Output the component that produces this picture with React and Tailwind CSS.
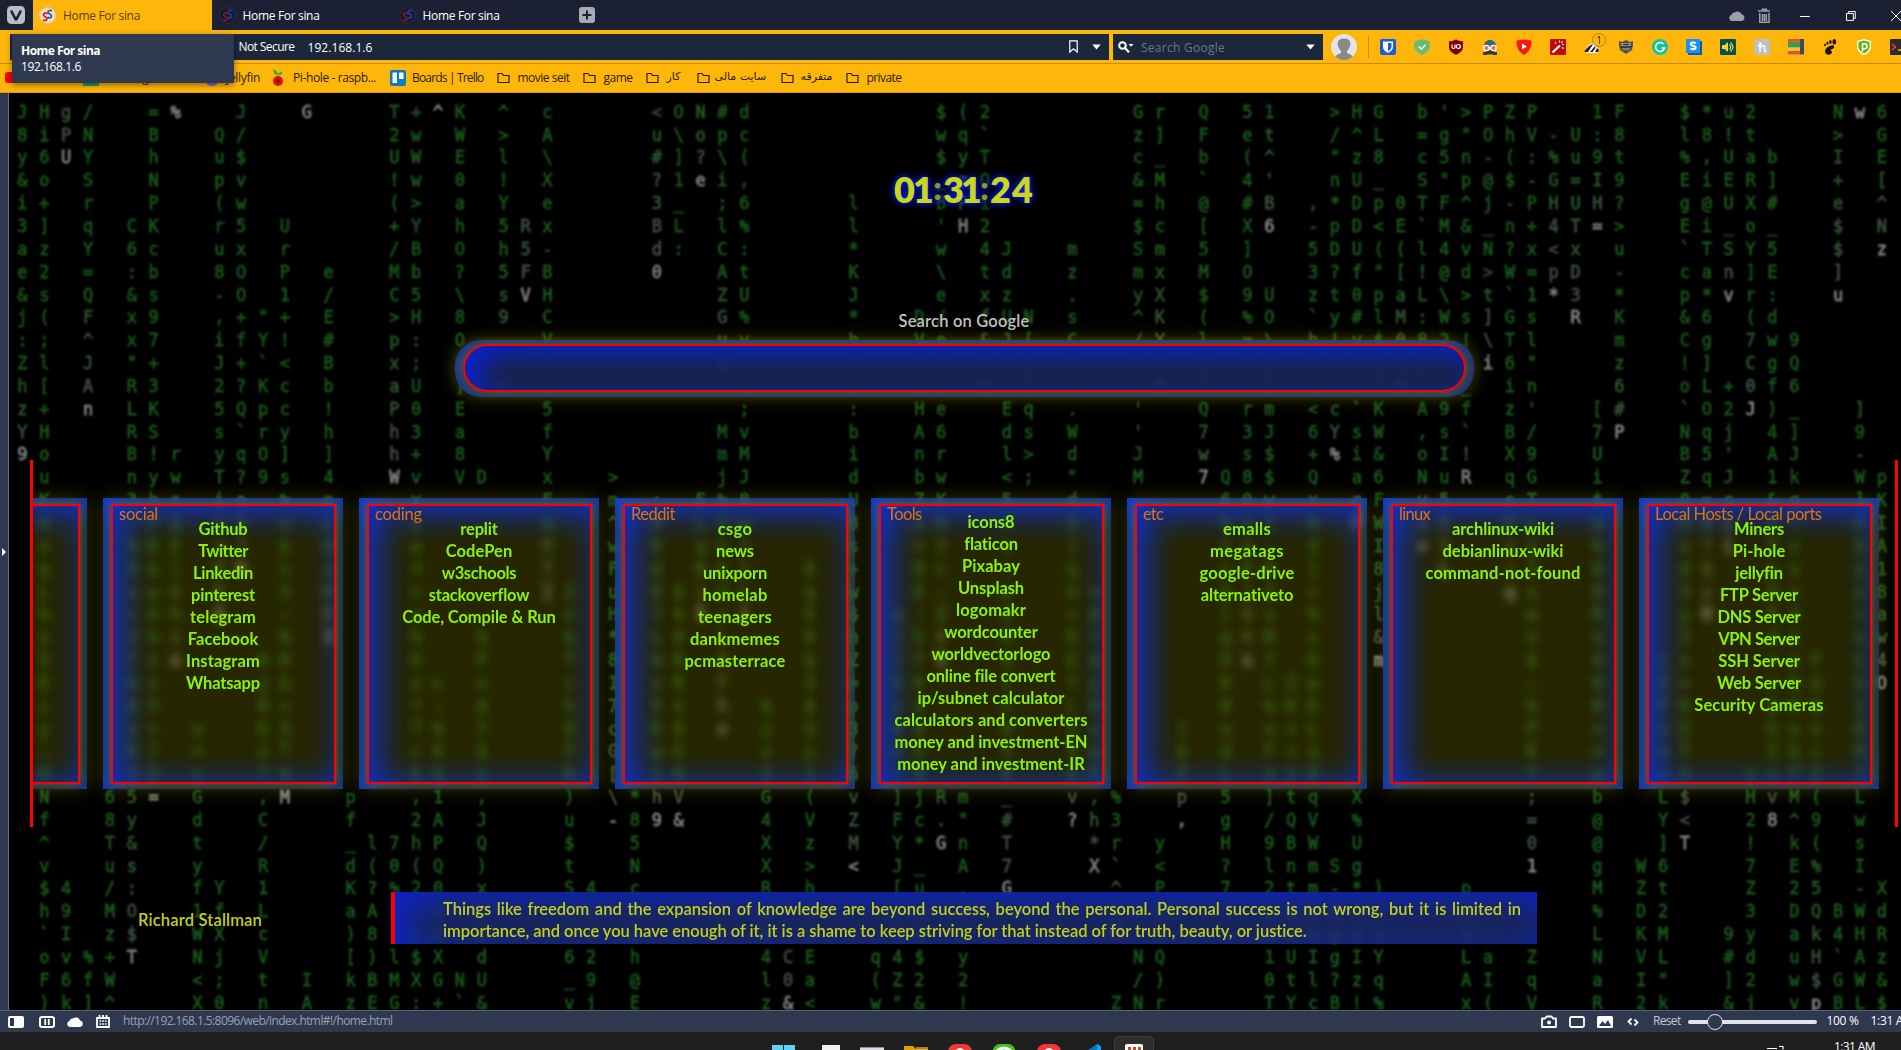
import React, { useLayoutEffect, useRef } from "react";

const ROWS = 40;
const COLS = 86;
const POOL = "x8sK=o5&Rd+wE3?nT]c$Lq6:yU%hZ0iF";

// Each run of characters: [column, first row, characters, ends with a bright head]
const RUNS = [
  [0, 0, "J8y&i3ae&j:ZhzY9", 1], [1, 0, "Hi6o+]z2s(;l[+Hou"], [2, 0, "gPU", 1], [3, 0, "/NYSrqY=QF^JAn", 1],
  [5, 5, "C6:&xx\"RLRBn"], [6, 0, "=BhNPKcbs97+3KS!y"], [7, 0, "%", 1], [7, 15, "rw"], [9, 1, "Qup(ru8-,iJ25syT"],
  [10, 0, "J/$vw5xOO+f+?Q`q?"], [11, 9, "\"Y`KprO9"], [12, 5, "UrP1+!<ccy]s"], [13, 0, "G", 1], [14, 7, "e/E#Bb!h]4"],
  [17, 0, "T2U!(+/MC>pxaPhhW", 1], [18, 0, "+wWw>YBb5H:;U03+v"], [19, 0, "^", 1], [20, 0, "KWE0ahO?\\8Ox]Ea8V"],
  [21, 16, "D"], [22, 0, "^>l!Y5h5s9 rk", 1], [23, 5, "R5FV", 1], [24, 0, "cA\\Xex-BHCVxw5fYx"], [27, 16, ">"],
  [29, 0, "<u#?3Bd0", 1], [30, 0, "O\\]1_L:"], [31, 0, "No?e", 1], [32, 0, "#p\\i;lCAZGuH", 1], [32, 14, "Mmj"],
  [33, 0, "dc(,6%:tU%v.6;vMJ"], [38, 4, "ll*KJ*hxs:bid"], [41, 9, "DV8mHAnb"], [42, 0, "$w$_B'w\\e/e?we6rw"],
  [43, 0, "(qyzPH", 1], [44, 0, "2`TOi24txf&t6", 1], [45, 6, "JdzUJlTEdl<"], [46, 9, "N[(Tqs>;"],
  [48, 6, "mz.sCms.Wd\""], [51, 0, "Gzc&=$Smy^/e!''JM"], [52, 0, "r]_MhcmxXKYx8", 1], [54, 0, "QFb`@[5M$(lm0Q7w7", 1],
  [55, 16, "Q"], [56, 0, "5e(4#X]O9%=Ysr3s8"], [57, 0, "1t^'B6", 1], [57, 8, "UO\\m8mJ$$"], [59, 4, ",-53z`h82<6+Q"],
  [60, 0, ">/\"n*pD?ty!srcY%", 1], [61, 0, "H^zUDDUf0#v2o`sia"], [62, 0, "GL8_p<(\"pl$wPKW&6"], [63, 4, "0E([aM0h8", 1],
  [64, 0, "b=cST`l!L:8a2A,oN"], [65, 0, "'g5\"FM4@\\W2rd9sIu"], [66, 0, ">\"np^&vd>s!"], [66, 12, "_f`!R", 1],
  [67, 0, "PO-@j_N>t]\\i", 1], [68, 0, "Zh($-n?W`GT6izBXq"], [69, 0, "PV:-P+x=1sl\"n'/9G"], [70, 1, "-%GH4<p*", 1],
  [71, 1, "Uu=UTxD3R", 1], [72, 0, "1:9IH=", 1], [72, 13, "[7Ui"], [73, 0, "F8t9?>u-*Kmz6#P", 1],
  [76, 0, "$l%EgE`cp&C!o`NBZ"], [77, 0, "*8,i@iTa*6g]LOq5q"], [78, 0, "u!UEU_Snv", 1], [78, 12, "+2j'J"],
  [79, 0, "2taRXoY]r(7C0J", 1], [80, 2, "b]#_5E:dwgf)4A1"], [81, 10, "9Q6_]Jk"], [83, 0, "N>I+e$$]u", 1],
  [84, 0, "w", 1], [84, 13, "]9-W"], [85, 0, "6GE[^Nz", 1], [85, 16, "pKIA18aw4O", 1],
  [27, 17, "m^wFuH*817cG[\\-", 1], [62, 17, "FWI8jl&m", 1],
  [1, 30, "Nf^v$h`oF)"], [2, 34, "49Iv6k"], [3, 37, "%f]"], [4, 30, "68Tu/Mz+W^"], [5, 30, "5y&s:O$T", 1], [6, 30, "=", 1],
  [8, 30, "Gdtyf1WN<X"], [9, 34, "YfXj;0"], [11, 30, ",C/R1LcVtn"], [12, 30, "M", 1], [13, 38, "IA"], [15, 30, "pf_dKa)[kz"],
  [16, 32, "l(?A8)BE"], [17, 32, "70%xslMG"], [18, 30, ",2h(2om$X:"], [19, 30, "1APQ0keXG+"], [20, 38, "N`"],
  [21, 30, ",JQ)x2vdU&"], [25, 30, ")u$tSa76_v"], [26, 34, "4bc29j"], [28, 30, "*85Ncrsh@E"], [29, 30, "h9", 1],
  [30, 30, "V&", 1], [34, 30, "G4XXRpt4lz"], [35, 37, "C0&", 1], [36, 30, "(Vz>herEa<"], [38, 30, "vZM<", 1], [39, 37, "q(w"],
  [40, 30, "]FYJ[cv4Z\""], [41, 30, "jc*_umn$2&"], [42, 30, "R.G", 1], [43, 30, "m\"nA.xzy2!"], [45, 30, "_#T7G", 1],
  [48, 30, "v?", 1], [49, 30, ",h*X", 1], [50, 30, "%3r`^s*", 1], [50, 39, "Z"], [51, 37, "N/N"], [52, 32, "y<PmsQ)r"],
  [53, 30, "p,", 1], [55, 30, "5gH?7"], [57, 30, "]/9l2ms10T"], [58, 30, "tQBnterUtY"], [59, 30, "qVWmmseIlc"],
  [60, 33, "S-kgg?B"], [61, 30, "X%Ug*vaIz!"], [62, 34, ")csYq%"], [66, 34, "pmvLAx"], [67, 37, "aI("], [69, 30, ";=01", 1],
  [69, 37, "ZqV"], [72, 30, "b@@gM%LNaR"], [74, 33, "WZDKVI2"], [75, 30, "LY]6t2ML\"k"], [76, 30, "$<T", 1],
  [78, 36, "9#]&"], [79, 30, "H2!7Z3yd2j"], [80, 30, "v8", 1], [81, 30, "M^kE2Dauwv"], [82, 30, "(9(%5QkH$p", 1],
  [83, 35, "B4`GB"], [84, 30, "LwsI-WHAWL"], [85, 34, "XdRz&$"],
];

// Streams that pass behind the cards: [column, first row, last row, ends with a bright head]
const STREAMS = [
  [1, 17, 29], [5, 17, 29], [6, 17, 29], [7, 17, 24, 1], [9, 17, 22, 1], [10, 17, 20, 1], [12, 17, 29], [14, 17, 23, 1],
  [8, 27, 29], [11, 24, 29], [18, 17, 29], [19, 25, 29], [21, 23, 29], [24, 17, 21, 1], [25, 21, 29], [29, 17, 29],
  [30, 21, 29], [31, 17, 22, 1], [32, 17, 27, 1], [33, 17, 22, 1], [34, 26, 29], [36, 20, 29], [38, 17, 29], [40, 22, 29],
  [41, 17, 29], [42, 17, 24, 1], [45, 17, 29], [48, 17, 29], [49, 21, 29], [53, 27, 29], [55, 17, 29], [56, 17, 24, 1],
  [57, 17, 29], [58, 25, 29], [59, 17, 29], [61, 17, 18, 1], [64, 17, 19, 1], [65, 17, 20, 1], [68, 17, 21, 1], [69, 17, 29],
  [72, 17, 29], [75, 24, 29], [76, 17, 29], [77, 17, 22, 1], [78, 17, 19, 1], [79, 29, 29], [80, 17, 29], [81, 17, 29],
  [82, 24, 29], [84, 17, 29],
];

const GREEN = [25, 84, 25];
const GREY = [68, 75, 68];

function buildRain() {
  const grid = Array.from({ length: COLS }, () => Array(ROWS).fill(null));
  const put = (c, r0, chars, head) => {
    const last = r0 + chars.length - 1;
    const fade = 3 + ((c * 7) % 6);
    [...chars].forEach((ch, i) => {
      const r = r0 + i;
      const k = head ? Math.max(0, 1 - (last - r) / fade) : 0;
      const rgb = GREEN.map((g, n) => Math.round(g + (GREY[n] - g) * k));
      grid[c][r] = { ch, color: head && r === last ? "rgb(128,128,128)" : `rgb(${rgb.join(",")})` };
    });
  };
  STREAMS.forEach(([c, a, b, head]) => {
    let s = "";
    for (let r = a; r <= b; r++) s += POOL[(c * 11 + r * 5 + ((c * r) % 7)) % POOL.length];
    put(c, a, s, head);
  });
  RUNS.forEach(([c, r, s, head]) => put(c, r, s, head));
  return grid;
}
const RAIN = buildRain();

function Rain() {
  return (
    <div aria-hidden="true" className="absolute left-[2.5px] top-[7.8px] flex blur-[0.9px] font-['DejaVu_Sans_Mono',monospace] text-[17px] leading-[22.85px] [-webkit-text-stroke:0.8px_currentColor]">
      {RAIN.map((col, c) => (
        <div key={c} className="w-[21.885px] shrink-0 text-center">
          {col.map((cell, r) => (
            <div key={r} className="h-[22.85px]" style={cell ? { color: cell.color } : undefined}>
              {cell ? cell.ch : ""}
            </div>
          ))}
        </div>
      ))}
    </div>
  );
}

// Text whose tracking (or word spacing) is adjusted so that it fills a given width.
function Fit({ w, words = false, className = "", children }) {
  const ref = useRef(null);
  useLayoutEffect(() => {
    const el = ref.current;
    el.style.letterSpacing = "0px";
    el.style.wordSpacing = "0px";
    const natural = el.getBoundingClientRect().width;
    if (words) el.style.wordSpacing = `${(w - natural) / (children.split(" ").length - 1)}px`;
    else el.style.letterSpacing = `${(w - natural) / children.length}px`;
  }, [w, words, children]);
  return <span ref={ref} className={`inline-block shrink-0 whitespace-nowrap ${className}`}>{children}</span>;
}

const CARDS = [
  { title: "", tw: 0, links: [] },
  { title: "social", tw: 39, links: [["Github", 49], ["Twitter", 49], ["Linkedin", 60], ["pinterest", 64], ["telegram", 66], ["Facebook", 70.5], ["Instagram", 74], ["Whatsapp", 74]] },
  { title: "coding", tw: 47, links: [["replit", 37.5], ["CodePen", 66.5], ["w3schools", 74.5], ["stackoverflow", 100.5], ["Code, Compile & Run", 153.5]] },
  { title: "Reddit", tw: 44, links: [["csgo", 34.5], ["news", 38], ["unixporn", 64], ["homelab", 65], ["teenagers", 74], ["dankmemes", 90], ["pcmasterrace", 101]] },
  { title: "Tools", tw: 34.5, tight: true, links: [["icons8", 47], ["flaticon", 54], ["Pixabay", 58], ["Unsplash", 66], ["logomakr", 70], ["wordcounter", 93.5], ["worldvectorlogo", 119], ["online file convert", 129], ["ip/subnet calculator", 147], ["calculators and converters", 193], ["money and investment-EN", 193], ["money and investment-IR", 187.5]] },
  { title: "etc", tw: 20, links: [["emalls", 48], ["megatags", 74], ["google-drive", 95], ["alternativeto", 93]] },
  { title: "linux", tw: 31, links: [["archlinux-wiki", 102], ["debianlinux-wiki", 121], ["command-not-found", 155]] },
  { title: "Local Hosts / Local ports", tw: 166.5, links: [["Miners", 50], ["Pi-hole", 52.5], ["jellyfin", 47.5], ["FTP Server", 78], ["DNS Server", 83], ["VPN Server", 81.5], ["SSH Server", 81.5], ["Web Server", 84], ["Security Cameras", 129.5]] },
];

function Card({ title, tw, links, tight }) {
  return (
    <section className="h-[291px] w-[240px] shrink-0 bg-[rgba(255,255,0,0.15)] px-[7.5px] pb-[5.5px] pt-[5.5px] shadow-[0_0_18px_rgba(255,255,0,0.2),inset_9px_6px_40px_#1040f0] backdrop-blur-[4px]">
      <div className="h-full border-2 border-[#ff0000] px-1.5 shadow-[0_0_8px_rgba(150,150,0,0.6),inset_8px_5px_34px_rgba(8,36,220,0.5)]">
        <h2 className={`pl-[0.5px] text-[16.5px] leading-[22px] text-[#e07210] ${tight ? "-mt-[3px] mb-[-7.5px] h-[16px]" : "-mt-[3px] h-[15px]"}`}>
          {title && <Fit w={tw}>{title}</Fit>}
        </h2>
        <ul className="text-center text-[16.5px] font-bold leading-[22px] text-[#8cf20a]">
          {links.map(([t, w]) => (
            <li key={t} className="h-[22px]"><Fit w={w}>{t}</Fit></li>
          ))}
        </ul>
      </div>
    </section>
  );
}

const Favicon = ({ light }) => (
  <svg viewBox="0 0 18 18" className="h-[17px] w-[17px] shrink-0">
    <circle cx="9" cy="9" r="8.300" fill={light ? "#f0dfae" : "#151a26"} stroke={light ? "#c9d3e6" : "#2a3246"} />
    <path d="M8.600 7.400C7.600 5.700 4.600 6.300 4.800 8.500c.2 2 3.700 1.600 3.700 4 0 2.100-3 2.500-4.100.7" fill="none" stroke={light ? "#d01c34" : "#8d1028"} strokeWidth="1.800" />
    <path d="M13.300 4.600C12.300 2.900 9.300 3.500 9.500 5.700c.2 2 3.700 1.600 3.700 4 0 2.100-3 2.500-4.100.7" fill="none" stroke={light ? "#2250c8" : "#1a3fae"} strokeWidth="1.800" />
  </svg>
);

const Caret = ({ className = "" }) => (
  <svg viewBox="0 0 9 6" className={`h-[6px] w-[9px] shrink-0 ${className}`}><path d="M0.300 0.500h8.400L4.500 5.500z" fill="#fff" /></svg>
);

const FolderIcon = () => (
  <svg viewBox="0 0 13 12" className="h-3 w-[13px] shrink-0"><path d="M1 1.500h4l1.500 2H12v7H1z" fill="none" stroke="#2a1d00" strokeWidth="1.200" /></svg>
);

const EXTENSIONS = [
  <g key="bw"><rect width="16" height="16" rx="2" fill="#175ddc" /><path d="M3 2.500h10v5.500c0 3-3 4.800-5 5.800-2-1-5-2.800-5-5.800z" fill="#fff" /><path d="M8 4h3.500v4c0 2-2 3.300-3.500 4.200z" fill="#175ddc" /></g>,
  <g key="ag"><path d="M8 .3l7.700 1.900v4.800c0 4.200-3.600 7-7.700 9C3.900 14 .3 11.200.3 7V2.200z" fill="#68bc71" /><path d="M4.800 7.400l2.600 2.800 4.200-4.600" fill="none" stroke="#fff" strokeWidth="1.400" /></g>,
  <g key="ub"><path d="M8 .3c2 1.500 4.500 2 7 2v5.700c0 4-3.500 6-7 8-3.500-2-7-4-7-8V2.300c2.500 0 5-.5 7-2z" fill="#800000" /><path d="M4 5.500v2.500q0 1.500 1.500 1.500T7 8V5.500" fill="none" stroke="#fff" strokeWidth="1.200" /><circle cx="10.300" cy="7.500" r="2" fill="none" stroke="#fff" strokeWidth="1.200" /></g>,
  <g key="sp"><path d="M2 8C2 3 4.500 1 8 1s6 2 6 7z" fill="#2c6b7a" /><path d="M4 11h8v4.500H4z" fill="#33383c" /><circle cx="4.500" cy="9" r="3.300" fill="#fff" /><circle cx="11.500" cy="9" r="3.300" fill="#fff" /><circle cx="4.500" cy="9" r="2" fill="#e86a50" /><circle cx="11.500" cy="9" r="2" fill="#e86a50" /><path d="M1 13h4v3H1zM11 13h4v3h-4z" fill="#333a48" /></g>,
  <g key="yt"><path d="M8 .5c2.500 0 5 .5 7.500 1.200C16 8 13 13 8 16 3 13 0 8 .5 1.700 3 1 5.500.5 8 .5z" fill="#f41a12" /><path d="M6 4.500v6l5-3z" fill="#fff" /></g>,
  <g key="wand"><rect width="16" height="16" rx="1" fill="#c00a0a" /><path d="M2.500 13.500l7.500-7" stroke="#fff" strokeWidth="2.200" /><path d="M9.500 1.500v2M12.500 2l-1 2M14 5.500h-2M5 3l1 1.500M12 8.500l1.500 1" stroke="#fff" strokeWidth="1.100" /></g>,
  <g key="pb"><path d="M0 13c2-5 5-8 9-9l6 6-2 4H6z" fill="#fff" /><path d="M0 13c2-3 4-6 9-8l-1 2-4 6zM6 13l5-6 .5 2-3 4zM11 13l2-4 2 2-1 2z" fill="#222" /></g>,
  <g key="sh"><path d="M1 2l3 1 4-2 4 2 3-1v4l-1 5-6 4-6-4-1-5z" fill="#55534e" /><path d="M3.500 4h9v3h-9zM4 9.500h8v1H4z" fill="#aaa79d" /><path d="M5 5.500h6M2 8.300l12-.6" stroke="#333" strokeWidth="1.300" /></g>,
  <g key="gr"><circle cx="8" cy="8" r="8" fill="#15c39a" /><path d="M11.500 5A4.500 4.500 0 1 0 12.500 9H9.500" fill="none" stroke="#fff" strokeWidth="1.500" /></g>,
  <g key="st"><path d="M2 2h14v14H2z" fill="#0a5ea8" /><rect width="14" height="14" fill="#1e90f5" /><path d="M9.800 4.200C8 3 4.600 3.200 4.700 5.200c.1 1.800 5 1.200 5 3.400 0 2-3.600 2.100-5.200.8" fill="none" stroke="#fff" strokeWidth="2" /></g>,
  <g key="vol"><rect width="16" height="16" rx="1" fill="#064f4f" /><path d="M2 6h2.500L8 3v10L4.500 10H2z" fill="#f3d52e" /><path d="M9.500 5.500q2.500 2.500 0 5M10.500 3.500q5 4.500 0 9" fill="none" stroke="#f3d52e" strokeWidth="1.200" /></g>,
  <g key="ho"><rect width="16" height="16" rx="3" fill="#bfbfbf" /><path d="M6 3v10M6 9q3-3.500 4.500-1.500V12q1 1 2 0M4 7l4-2" fill="none" stroke="#fff" strokeWidth="1.500" /></g>,
  <g key="to"><path d="M0 0h12v4H0z" fill="#e5533d" /><path d="M0 3.500h12v5H0z" fill="#1ea55b" /><path d="M0 8.500h12v3.500H0z" fill="#f2c522" /><path d="M0 12h12v3.500H0z" fill="#e5533d" /><path d="M12 0h4v15.500h-4z" fill="#3b4a58" /></g>,
  <g key="gn" fill="#1a1200"><path d="M9 6.500c3-1 4 1 2.500 2.800C10 11 8.500 10 8.500 11.500c0 1 1.500 0 1.500 1.500 0 2-2.500 3-4.500 2.500C2 14.500 1.500 9 9 6.500z" /><ellipse cx="12.300" cy="2.800" rx="1.900" ry="2.700" /><ellipse cx="8.400" cy="3" rx="1.200" ry="1.900" /><ellipse cx="5.400" cy="4.200" rx="1" ry="1.600" /><ellipse cx="3" cy="6" rx=".9" ry="1.300" /></g>,
  <g key="pv"><path d="M8 0l7 2v5c0 5-4 8-7 9-3-1-7-4-7-9V2z" fill="#fff" /><path d="M8 1.500l5.600 1.600V7c0 4-3 6.400-5.600 7.500C5.400 13.400 2.400 11 2.400 7V3.100z" fill="#5cb811" /><path d="M6.500 13V4.800h2a2.500 2.500 0 0 1 0 5h-1.500" fill="none" stroke="#fff" strokeWidth="1.500" /></g>,
  <g key="tm"><rect width="16" height="16" rx="1" fill="#2a2a30" /><path d="M2 5l3.500 3L2 11" fill="none" stroke="#f0483e" strokeWidth="1.500" /><path d="M8 11h6" stroke="#f5b51c" strokeWidth="1.600" /></g>,
];

function TabBar() {
  return (
    <div className="flex h-[30px] items-center bg-[#1b2133] text-[12px] text-white">
      <div className="flex w-[33px] justify-center pr-[7px]">
        <svg viewBox="0 0 18 18" className="ml-[6px] h-[18px] w-[18px] shrink-0"><rect width="18" height="18" rx="4.500" fill="#b9bdc6" /><path d="M4.500 5.500L8.500 13q.5.800 1 0L13.500 5.500" fill="none" stroke="#1b2133" strokeWidth="2.600" strokeLinecap="round" /></svg>
      </div>
      {[0, 1, 2].map((i) => (
        <div key={i} className={i === 0 ? "flex h-full w-[179px] items-center gap-[7px] bg-[#ffb60a] pl-1.5 pt-px text-[#5b3f00]" : "flex h-full w-[180px] items-center gap-[7px] pl-[6.5px] pt-px"}>
          <Favicon light={i === 0} />
          <Fit w={77} className="mt-px">Home For sina</Fit>
        </div>
      ))}
      <svg viewBox="0 0 16 16" className="ml-[7px] h-4 w-4"><rect width="16" height="16" rx="3" fill="#a7abb4" /><path d="M8 3.500v9M3.500 8h9" stroke="#1b2133" strokeWidth="2" /></svg>
      <div className="ml-auto flex h-full w-[176px] shrink-0 items-center pt-px">
        <svg viewBox="0 0 16 11" className="ml-[4px] h-[11px] w-4" fill="#9ba0a9"><path d="M3 11a3 3 0 0 1-.5-5.900A3 3 0 0 1 6 2.500 4.300 4.300 0 0 1 13 4.500 3.300 3.300 0 0 1 13 11z" /></svg>
        <svg viewBox="0 0 13 16" className="ml-[13px] h-4 w-[13px]" fill="none" stroke="#9ba0a9" strokeWidth="1.500"><path d="M0 3h13M4.500 2.500V1h4v1.500M1.800 5v9.300h9.400V5M4.500 6v7M6.500 6v7M8.500 6v7" /></svg>
        <svg viewBox="0 0 10 10" className="ml-[30px] h-[10px] w-[10px]"><path d="M0 5.500h10" stroke="#fff" /></svg>
        <svg viewBox="0 0 10 10" className="ml-[36px] h-[10px] w-[10px]" fill="none" stroke="#fff"><path d="M.5 2.500h7v7h-7zM2.500 2.500v-2h7v7h-2" /></svg>
        <svg viewBox="0 0 10 10" className="ml-[35px] h-[10px] w-[10px] shrink-0" fill="none" stroke="#fff"><path d="M0 0l10 10M10 0L0 10" /></svg>
      </div>
    </div>
  );
}

function Toolbar() {
  return (
    <div className="flex h-[34px] items-center overflow-hidden border-b border-[#c98c08] bg-[#ffb60a] text-[12px] text-white">
      <div className="ml-[10px] flex h-[26px] w-[1099px] shrink-0 items-center bg-[#1b273a]">
        <Fit w={56} className="ml-[228.5px]">Not Secure</Fit>
        <Fit w={65} className="ml-[13px] mt-[3px]">192.168.1.6</Fit>
        <svg viewBox="0 0 9 13" className="ml-auto h-[13px] w-[9px]"><path d="M.8.8h7.400v11.200L4.500 8.800.8 12z" fill="none" stroke="#fff" strokeWidth="1.200" /></svg>
        <Caret className="ml-[14px] mr-[8px]" />
      </div>
      <div className="ml-1 flex h-[26px] w-[210px] shrink-0 items-center bg-[#1b273a]">
        <svg viewBox="0 0 16 12" className="ml-[5px] h-3 w-4"><circle cx="4.500" cy="4.500" r="3.300" fill="none" stroke="#fff" strokeWidth="2" /><path d="M7 7l4 4.300" stroke="#fff" strokeWidth="2.200" /><path d="M10.500 3h5l-2.500 2.800z" fill="#fff" /></svg>
        <Fit w={84} className="ml-[7px] mt-[3px] text-[#6e7785]">Search Google</Fit>
        <Caret className="ml-auto mr-[8px]" />
      </div>
      <svg viewBox="0 0 26 26" className="ml-[8px] h-[26px] w-[26px] shrink-0"><circle cx="13" cy="13" r="13" fill="#e4e4e4" /><path d="M4 22.500q3-3 6-3.500v-2c-3-3-4-6.500-3-9.500 1.500-4 10.500-4 12 0 1 3 0 6.500-3 9.500v2q3 .5 6 3.500A13 13 0 0 1 4 22.500z" fill="#8a8a8a" /></svg>
      <div className="ml-[11px] h-[22px] w-px shrink-0 bg-[#c98c08]" />
      <div className="ml-[2px] flex shrink-0">
        {EXTENSIONS.map((e, i) => (
          <div key={i} className="relative flex w-[34px] shrink-0 justify-center">
            <svg viewBox="0 0 16 16" className="h-4 w-4">{e}</svg>
            {i === 6 && <span className="absolute -top-[6px] left-[17px] flex h-[14px] w-[14px] items-center justify-center rounded-full border border-[#b98200] bg-[#ffb60a] text-[10px] leading-none text-[#2a1d00]">1</span>}
          </div>
        ))}
      </div>
    </div>
  );
}

function Bookmarks() {
  return (
    <div className="flex h-[29px] items-center overflow-hidden border-b border-[#e09c00] bg-[#ffb60a] pb-px text-[12px] text-[#2a1d00]">
      <span className="ml-[5px] h-[11px] w-4 shrink-0 rounded-[3px] bg-[#f00]" />
      <span className="ml-[62px] mt-[2px] h-[14px] w-4 shrink-0 bg-[#1f9d5c]" />
      <span className="ml-[20px] w-[60px] shrink-0 whitespace-nowrap">Google Sh</span>
      <span className="ml-[25px] mt-px h-4 w-4 shrink-0 rounded-full bg-[#7a6cc8]" />
      <Fit w={34} className="ml-[6px]">Jellyfin</Fit>
      <svg viewBox="0 0 12 18" className="ml-[12px] h-[18px] w-3 shrink-0"><circle cx="6" cy="12" r="5" fill="#e01010" /><circle cx="6" cy="12" r="1.800" fill="#7a0a0a" /><path d="M6 6.500C3 6 1.500 4 1 .5c3 0 5 2.500 5 6zm0 0C6.500 4 8 2.500 10.500 2.500 10 5 8.500 6.500 6 6.500z" fill="#1fb61f" /></svg>
      <Fit w={83} className="ml-[9px]">Pi-hole - raspb...</Fit>
      <svg viewBox="0 0 16 16" className="ml-[14px] h-4 w-4 shrink-0"><rect width="16" height="16" rx="2" fill="#0a7cc4" /><rect x="2.500" y="2.500" width="4.500" height="10.500" rx=".6" fill="#fff" /><rect x="9" y="2.500" width="4.500" height="6.500" rx=".6" fill="#fff" /></svg>
      <Fit w={71.500} className="ml-[6px]">Boards | Trello</Fit>
      <span className="ml-[13px] flex w-[73px] shrink-0 items-center gap-[8px]"><FolderIcon /><Fit w={52}>movie seit</Fit></span>
      <span className="ml-[13px] flex w-[50px] shrink-0 items-center gap-[8px]"><FolderIcon /><Fit w={29}>game</Fit></span>
      <span className="ml-[13px] flex w-[38px] shrink-0 items-center gap-[8px]"><FolderIcon /><span dir="rtl" className="whitespace-nowrap font-['DejaVu_Sans',sans-serif] text-[11px]">کار</span></span>
      <span className="ml-[13px] flex w-[71px] shrink-0 items-center gap-[5px]"><FolderIcon /><span dir="rtl" className="whitespace-nowrap font-['DejaVu_Sans',sans-serif] text-[11px]">سایت مالی</span></span>
      <span className="ml-[13px] flex w-[53px] shrink-0 items-center gap-[7px]"><FolderIcon /><span dir="rtl" className="whitespace-nowrap font-['DejaVu_Sans',sans-serif] text-[11px]">متفرقه</span></span>
      <span className="ml-[12px] flex shrink-0 items-center gap-[8px]"><FolderIcon /><Fit w={35}>private</Fit></span>
    </div>
  );
}

function Page() {
  return (
    <main className="relative h-[917px] grow overflow-hidden bg-black font-['Lato',sans-serif]">
      <Rain />
      <div className="relative flex flex-col">
        <div className="ml-[885px] mt-[71px] flex h-[50px] text-[36px] font-extrabold leading-[50px] text-[#cbd81a] [text-shadow:0_0_5px_#0020ff,0_0_9px_#0018d0]">
          <Fit w={38}>01</Fit>
          <span className="relative z-10 w-[11px] -translate-y-px text-center text-[32px] text-[#8f971c]">:</span>
          <Fit w={36}>31</Fit>
          <span className="relative z-10 w-[11px] -translate-y-px text-center text-[32px] text-[#8f971c]">:</span>
          <Fit w={44}>24</Fit>
        </div>
        <div className="mt-[96px] flex h-[22px] justify-center pl-[18px] text-[16.500px] font-semibold leading-[22px] text-[#c0c0c0]">
          <Fit w={131}>Search on Google</Fit>
        </div>
        <div className="ml-[446px] mt-[8px] h-[57px] w-[1019px] rounded-[26px] bg-[rgba(50,72,125,0.75)] px-[8px] pb-[5px] pt-[4px] shadow-[0_0_16px_rgba(255,255,0,0.3),inset_6px_3px_22px_rgba(20,60,230,0.45)] backdrop-blur-[4px]">
          <div className="h-full rounded-[24px] border-2 border-[#ff0000] bg-[rgba(12,18,36,0.5)] shadow-[0_0_8px_rgba(120,120,0,0.7),inset_14px_9px_28px_#0a22cc]" />
        </div>
        <div className="ml-[21px] mt-[63px] flex h-[367px] w-[1868px] items-start justify-end gap-4 overflow-hidden border-x-[3px] border-[#ff0000] pr-[16px] pt-[38px]">
          {CARDS.map((c, i) => <Card key={i} {...c} />)}
        </div>
        <div className="mt-[65px] flex text-[16.500px] font-semibold leading-[22px] text-[#c4d016]">
          <div className="w-[382px] shrink-0 pl-[129px] pt-[17px]"><Fit w={124}>Richard Stallman</Fit></div>
          <blockquote className="flex h-[52px] w-[1146px] flex-col items-start border-l-4 border-[#ff0000] bg-[rgba(40,58,105,0.65)] pl-[48px] pt-[6px] shadow-[inset_12px_8px_40px_#0a22d8] backdrop-blur-[4px]">
            <Fit w={1078} words>Things like freedom and the expansion of knowledge are beyond success, beyond the personal. Personal success is not wrong, but it is limited in</Fit>
            <Fit w={864}>importance, and once you have enough of it, it is a shame to keep striving for that instead of for truth, beauty, or justice.</Fit>
          </blockquote>
        </div>
      </div>
    </main>
  );
}

function StatusBar() {
  return (
    <footer className="flex h-[22px] items-center overflow-hidden border-t border-[#565f7d] bg-[#2e3950] text-[12px] text-white">
      <svg viewBox="0 0 16 12" className="ml-[8px] h-3 w-4 shrink-0"><rect width="16" height="12" rx="2" fill="#fff" /><rect x="2" y="2" width="4" height="8" fill="#2e3950" /></svg>
      <svg viewBox="0 0 16 12" className="ml-[15px] h-3 w-4 shrink-0"><rect x="1" y="1" width="14" height="10" rx="2" fill="none" stroke="#fff" strokeWidth="2" /><path d="M6.200 3v6M9.800 3v6" stroke="#fff" strokeWidth="1.800" /></svg>
      <svg viewBox="0 0 16 11" className="ml-[12px] h-[11px] w-4 shrink-0" fill="#fff"><path d="M3 11a3 3 0 0 1-.5-5.900A3 3 0 0 1 6 2.500 4.300 4.300 0 0 1 13 4.500 3.300 3.300 0 0 1 13 11z" /></svg>
      <svg viewBox="0 0 14 13" className="ml-[13px] h-[13px] w-[14px] shrink-0"><path d="M1 3h12v9H1zM3.500 0v2M7 0v2M10.500 0v2" fill="none" stroke="#fff" strokeWidth="1.800" /><path d="M3.500 6h7M3.500 9h7" stroke="#fff" strokeWidth="1.500" strokeDasharray="1.700 1" /></svg>
      <Fit w={269.500} className="ml-[13px] -translate-y-px text-[#98a1b0]">http://192.168.1.5:8096/web/index.html#!/home.html</Fit>
      <div className="ml-auto flex w-[360px] shrink-0 items-center">
        <svg viewBox="0 0 16 13" className="h-[13px] w-4 shrink-0"><path d="M1 3.500h3L5.500 1.500h5L12 3.500h3V12H1z" fill="none" stroke="#fff" strokeWidth="1.800" strokeLinejoin="round" /><circle cx="8" cy="7.500" r="2" fill="#fff" /></svg>
        <svg viewBox="0 0 16 12" className="ml-[12px] h-3 w-4 shrink-0"><rect x="1" y="1" width="14" height="10" rx="1.500" fill="none" stroke="#fff" strokeWidth="1.800" /></svg>
        <svg viewBox="0 0 16 12" className="ml-[12px] h-3 w-4 shrink-0"><rect width="16" height="12" rx="1.500" fill="#fff" /><path d="M2 10l3.500-5L8 8l3-4 3 6z" fill="#2e3950" /></svg>
        <svg viewBox="0 0 12 10" className="ml-[14px] h-[10px] w-3 shrink-0"><path d="M4.500 1.500L1.500 4.500l3 3M7.500 2.500l3 3-3 3" fill="none" stroke="#fff" strokeWidth="1.800" /></svg>
        <Fit w={27.500} className="ml-[14px] -translate-y-px text-[#c3c8d2]">Reset</Fit>
        <div className="relative ml-[7px] h-[4px] w-[129px] shrink-0 rounded-full bg-[#e3e3ea]">
          <span className="absolute -top-[6px] left-[19px] h-4 w-4 rounded-full border border-[#e3e3ea] bg-[#2e3950]" />
        </div>
        <Fit w={32} className="ml-[10px] -translate-y-px">100 %</Fit>
        <Fit w={43} className="ml-[12px] -translate-y-px">1:31 AM</Fit>
      </div>
    </footer>
  );
}

function Taskbar() {
  return (
    <div className="flex h-[18px] items-start overflow-hidden bg-[#1f1f1f] text-[12px] text-white">
      <svg viewBox="0 0 23 23" className="ml-[772px] mt-[13px] h-[23px] w-[23px] shrink-0"><path d="M0 0h11v11H0zM12 0h11v11H12z" fill="#5bd3fb" /></svg>
      <span className="ml-[27px] mt-[13px] h-5 w-[18px] shrink-0 bg-[#f3f3f3]" />
      <span className="ml-[20px] mt-[15px] h-5 w-6 shrink-0 border-t border-[#8f8fa0] bg-[#dcdce6]" />
      <svg viewBox="0 0 24 20" className="ml-[20px] mt-[13px] h-5 w-6 shrink-0"><path d="M0 1h9l3 3h12v16H0z" fill="#dea000" /><path d="M12 2h12v18H12z" fill="#f8c93c" opacity=".6" /></svg>
      <svg viewBox="0 0 24 24" className="ml-[20px] mt-3 h-6 w-6 shrink-0"><rect width="24" height="24" rx="8" fill="#ef3939" /><path d="M6 8q6-8 12 0z" fill="#fff" /></svg>
      <svg viewBox="0 0 22 22" className="ml-[21px] mt-3 h-[22px] w-[22px] shrink-0"><rect width="22" height="22" rx="7" fill="#3fc514" /><path d="M4 7q7-6 14 0" fill="none" stroke="#fff" strokeWidth="3" /></svg>
      <svg viewBox="0 0 24 24" className="ml-[22px] mt-3 h-6 w-6 shrink-0"><rect width="24" height="24" rx="8" fill="#ef3939" /><path d="M6 8q6-8 12 0z" fill="#fff" /></svg>
      <svg viewBox="0 0 24 24" className="ml-[19px] mt-3 h-6 w-6 shrink-0"><path d="M17 0l4 2v22H5z" fill="#1d9ff0" /><path d="M17 0v10L8 6z" fill="#0d72bd" /></svg>
      <span className="ml-[10px] mt-1 flex h-10 w-10 shrink-0 justify-center rounded-[5px] border border-[#3d3d3d] bg-[#2d2d2d] pt-[7px]">
        <span className="flex h-5 w-[18px] justify-center gap-[2px] rounded-[2px] bg-white pt-[3px]"><i className="h-[5px] w-[3px] bg-[#d84315]" /><i className="h-[5px] w-[3px] bg-[#d84315]" /><i className="h-[5px] w-[3px] bg-[#d84315]" /></span>
      </span>
      <svg viewBox="0 0 18 6" className="ml-[613px] mt-[12px] h-[6px] w-[18px] shrink-0"><path d="M0 4.500h10M12 2.500h4v3" fill="none" stroke="#fff" strokeWidth="1.200" /></svg>
      <Fit w={41} className="ml-[49px] mt-[6px] leading-[18px]">1:31 AM</Fit>
    </div>
  );
}

export default function App() {
  return (
    <div className="relative h-[1050px] w-[1901px] overflow-hidden bg-black font-['Open_Sans',sans-serif]">
      <TabBar />
      <Toolbar />
      <Bookmarks />
      <div className="flex h-[917px]">
        <div className="flex w-[9px] shrink-0 items-center border-r border-[#68718a] bg-[#2e3950]">
          <svg viewBox="0 0 4 8" className="ml-[2px] h-2 w-1"><path d="M0 0l4 4-4 4z" fill="#fff" /></svg>
        </div>
        <Page />
      </div>
      <StatusBar />
      <Taskbar />
      <div className="absolute left-3 top-[34px] h-[49px] w-[222px] bg-[#2e3950] pl-[9px] pt-[9px] text-[12px] leading-4 text-white shadow-[0_2px_6px_rgba(0,0,0,0.45)]">
        <div className="font-bold"><Fit w={79}>Home For sina</Fit></div>
        <div><Fit w={60}>192.168.1.6</Fit></div>
      </div>
    </div>
  );
}
